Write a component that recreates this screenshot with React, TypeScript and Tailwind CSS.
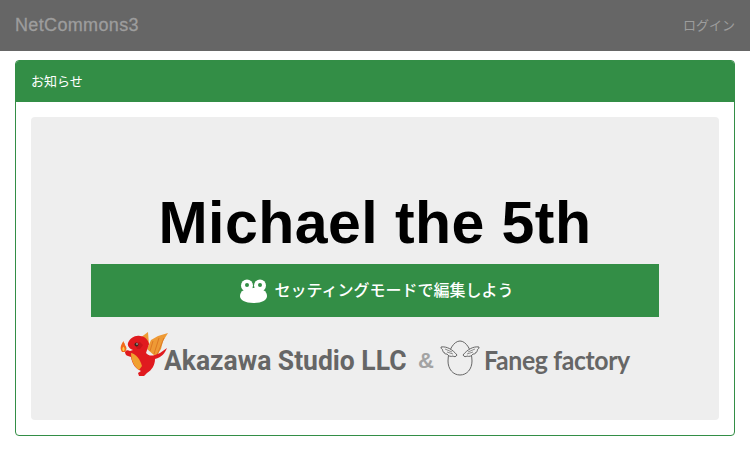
import React from 'react';

const sans = { fontFamily: '"Liberation Sans", "Noto Sans CJK JP", sans-serif' };

const Frog = () => (
  <svg width="27" height="24" viewBox="0 0 27 24" className="shrink-0">
    <circle cx="7" cy="6.500" r="6" fill="#fff" />
    <circle cx="20" cy="6.500" r="6" fill="#fff" />
    <circle cx="7" cy="6" r="2" fill="#338e46" />
    <circle cx="20" cy="6" r="2" fill="#338e46" />
    <path d="M0 17c0-5 5-8 13.500-8S27 12 27 17c0 4-5 7-13.500 7S0 21 0 17z" fill="#fff" />
  </svg>
);

const Dragon = () => (
  <svg width="50" height="46" viewBox="0 0 50 46" className="shrink-0">
    <path d="M16 9 L28 0 L29 13z" fill="#ee9a35" />
    <path d="M27 17 L31 8 L38 4 L48 1 L43 9 L41 17 L36 25z" fill="#ee9a35" />
    <path d="M33 9 L30 19M39 6 L34 22M44 6 L37 23" stroke="#d9701e" strokeWidth="0.800" />
    <path d="M26 21c3 3 5 3 9 2l5-2 7-5c-2 5-5 9-12 11 0 6-3 11-8 14l-3 3h-5l-1-3 3-2c-5-2-9-7-10-14l-3-1c-2 0-3-3-3-4 1-2 3-2 5-1l3-1c-3-1-6-4-5-7 2-5 7-8 12-7 5 0 8 4 9 8z" fill="#e01a1f" />
    <path d="M11 21c5 1 9 6 11 13l-3 4c-5-3-8-10-8-17z" fill="#f0a030" />
    <path d="M15 12l5-2 3 3-3 4h-3z" fill="#c8141a" />
    <circle cx="16.500" cy="12.500" r="2" fill="#3a2a20" />
    <circle cx="17" cy="12" r="0.700" fill="#fff" />
    <path d="M2 20c-2-3-2-6 1.500-11 0 2 1.500 2 1.500 4 2 2 2 5 0 7z" fill="#f26a1b" />
    <path d="M3 19c-1-1-1-3 .5-4.500 1 1.500 1.500 3 .5 4.500z" fill="#fbd34a" />
  </svg>
);

const Egg = () => (
  <svg width="40" height="36" viewBox="0 0 40 36" fill="none" stroke="#666" strokeWidth="1" className="shrink-0">
    <path d="M20 1c6 0 12 9 12 20 0 8-5 14-12 14S8 29 8 21C8 10 14 1 20 1z" fill="#eee" />
    <path d="M17 15C13 10 7 6 1 7c0 2 1 2 2 3-1 1 0 2 1 2 0 2 2 2 3 2 1 2 4 3 6 2 1 1 3 1 4-1z" fill="#eee" />
    <path d="M23 15c4-5 10-9 16-8 0 2-1 2-2 3 1 1 0 2-1 2 0 2-2 2-3 2-1 2-4 3-6 2-1 1-3 1-4-1z" fill="#eee" />
    <path d="M5 9l7 3M7 12l6 2M35 9l-7 3M33 12l-6 2" strokeWidth="0.700" />
  </svg>
);

const App: React.FC = () => {
  return (
    <div className="min-h-[450px] bg-white" style={sans}>
      <nav className="flex h-[51px] items-center justify-between bg-[#666666] px-[15px]">
        <span className="text-[18px] tracking-[0.35px] text-[#9d9d9d] [-webkit-text-stroke:0.3px_#9d9d9d]">NetCommons3</span>
        <span className="text-[13px] text-[#9d9d9d]">ログイン</span>
      </nav>
      <div className="px-[15px] pt-[9px]">
        <div className="overflow-hidden rounded border border-[#338e46] bg-white">
          <div className="flex h-[41px] items-center bg-[#338e46] px-[15px] text-[13px] text-white">お知らせ</div>
          <div className="p-[15px]">
            <div className="flex h-[303px] flex-col items-center rounded bg-[#eeeeee] pt-[73px]">
              <h1 className="text-[59px] leading-[66px] font-bold tracking-[0.45px] text-black">Michael the 5th</h1>
              <div className="mt-[8px] flex h-[53px] w-[568px] items-center justify-center gap-[7px] bg-[#338e46] pl-[4px] font-medium text-white">
                <Frog />
                <span className="text-[16px]">セッティングモードで編集しよう</span>
              </div>
              <div className="mt-[15px] flex h-[46px] items-center">
                <Dragon />
                <span className="-ml-[6px] w-[242px] pt-[13px] text-[27px] leading-none font-bold text-[#666666]" style={{ fontFamily: '"Roboto", sans-serif', transform: 'scaleX(0.98)', transformOrigin: 'left', whiteSpace: 'nowrap' }}>Akazawa Studio LLC</span>
                <span className="ml-[12px] pt-[11px] text-[22px] font-bold text-[#a3a3a3]">&amp;</span>
                <span className="ml-[6px] flex pt-[6px]"><Egg /></span>
                <span className="ml-[4px] w-[146px] pt-[8px] text-[27px] leading-none font-bold tracking-[-0.4px] text-[#666666]" style={{ fontFamily: '"Lato", sans-serif', transform: 'scaleX(0.92)', transformOrigin: 'left', whiteSpace: 'nowrap' }}>Faneg factory</span>
              </div>
            </div>
          </div>
        </div>
      </div>
    </div>
  );
};

export default App;
